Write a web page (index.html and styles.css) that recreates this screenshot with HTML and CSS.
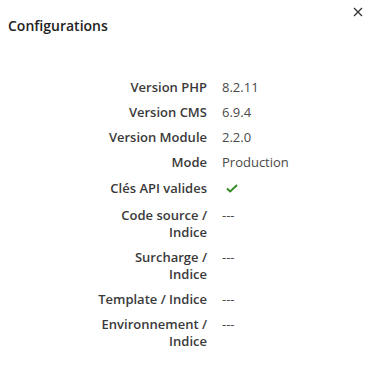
FILE: index.html
```html
<!DOCTYPE html>
<html lang="fr">
<head>
  <meta charset="UTF-8" />
  <title>Configurations</title>
  <link rel="stylesheet" href="styles.css">
</head>
<body>
  <div class="dialog">
    <div class="dialog-header">
      <h2 class="dialog-title">Configurations</h2>
      <button class="close" aria-label="Fermer">
        <svg width="10" height="10" viewBox="0 0 10 10"><path d="M1 1L9 9M9 1L1 9" stroke="#333" stroke-width="1.3" fill="none"/></svg>
      </button>
    </div>
    <div class="config">
      <div class="label">Version PHP</div><div class="value">8.2.11</div>
      <div class="label">Version CMS</div><div class="value">6.9.4</div>
      <div class="label">Version Module</div><div class="value">2.2.0</div>
      <div class="label">Mode</div><div class="value">Production</div>
      <div class="label tall">Clés API valides</div>
      <div class="value tall">
        <svg class="check" width="12" height="9" viewBox="0 0 12 9"><path d="M1 4.5L4.2 7.5L11 1" stroke="#2f8a1f" stroke-width="1.8" fill="none"/></svg>
      </div>
      <div class="label">Code source / Indice</div><div class="value">---</div>
      <div class="label">Surcharge / Indice</div><div class="value">---</div>
      <div class="label">Template / Indice</div><div class="value">---</div>
      <div class="label">Environnement / Indice</div><div class="value">---</div>
    </div>
  </div>
</body>
</html>
```

FILE: styles.css
```css
body {
  margin: 0;
  background: #fff;
  color: #333;
  font-family: "Open Sans", "Noto Sans", sans-serif;
}

.dialog {
  width: 376px;
  height: 380px;
  box-sizing: border-box;
}

.dialog-header {
  display: flex;
  justify-content: space-between;
  align-items: flex-start;
  padding: 0 0 0 8px;
}

.dialog-title {
  margin: 16px 0 0;
  font-size: 14px;
  line-height: 19px;
  font-weight: 600;
  color: #222;
}

.close {
  background: none;
  border: none;
  padding: 0;
  margin: 7px 13px 0 0;
  width: 10px;
  height: 10px;
  cursor: pointer;
}

.close svg {
  display: block;
}

/* Tableau des configurations */
.config {
  display: grid;
  grid-template-columns: 112px auto;
  column-gap: 15px;
  margin: 40px 0 0 95px;
  font-size: 13px;
  line-height: 17px;
}

.label,
.value {
  padding: 4px 0;
}

.label {
  text-align: right;
  font-weight: 600;
  color: #3a3a3a;
}

.value {
  color: #4a4a4a;
}

.tall {
  padding: 5px 0 6px;
}

.check {
  display: block;
  margin: 4px 0 0 4px;
}
```
